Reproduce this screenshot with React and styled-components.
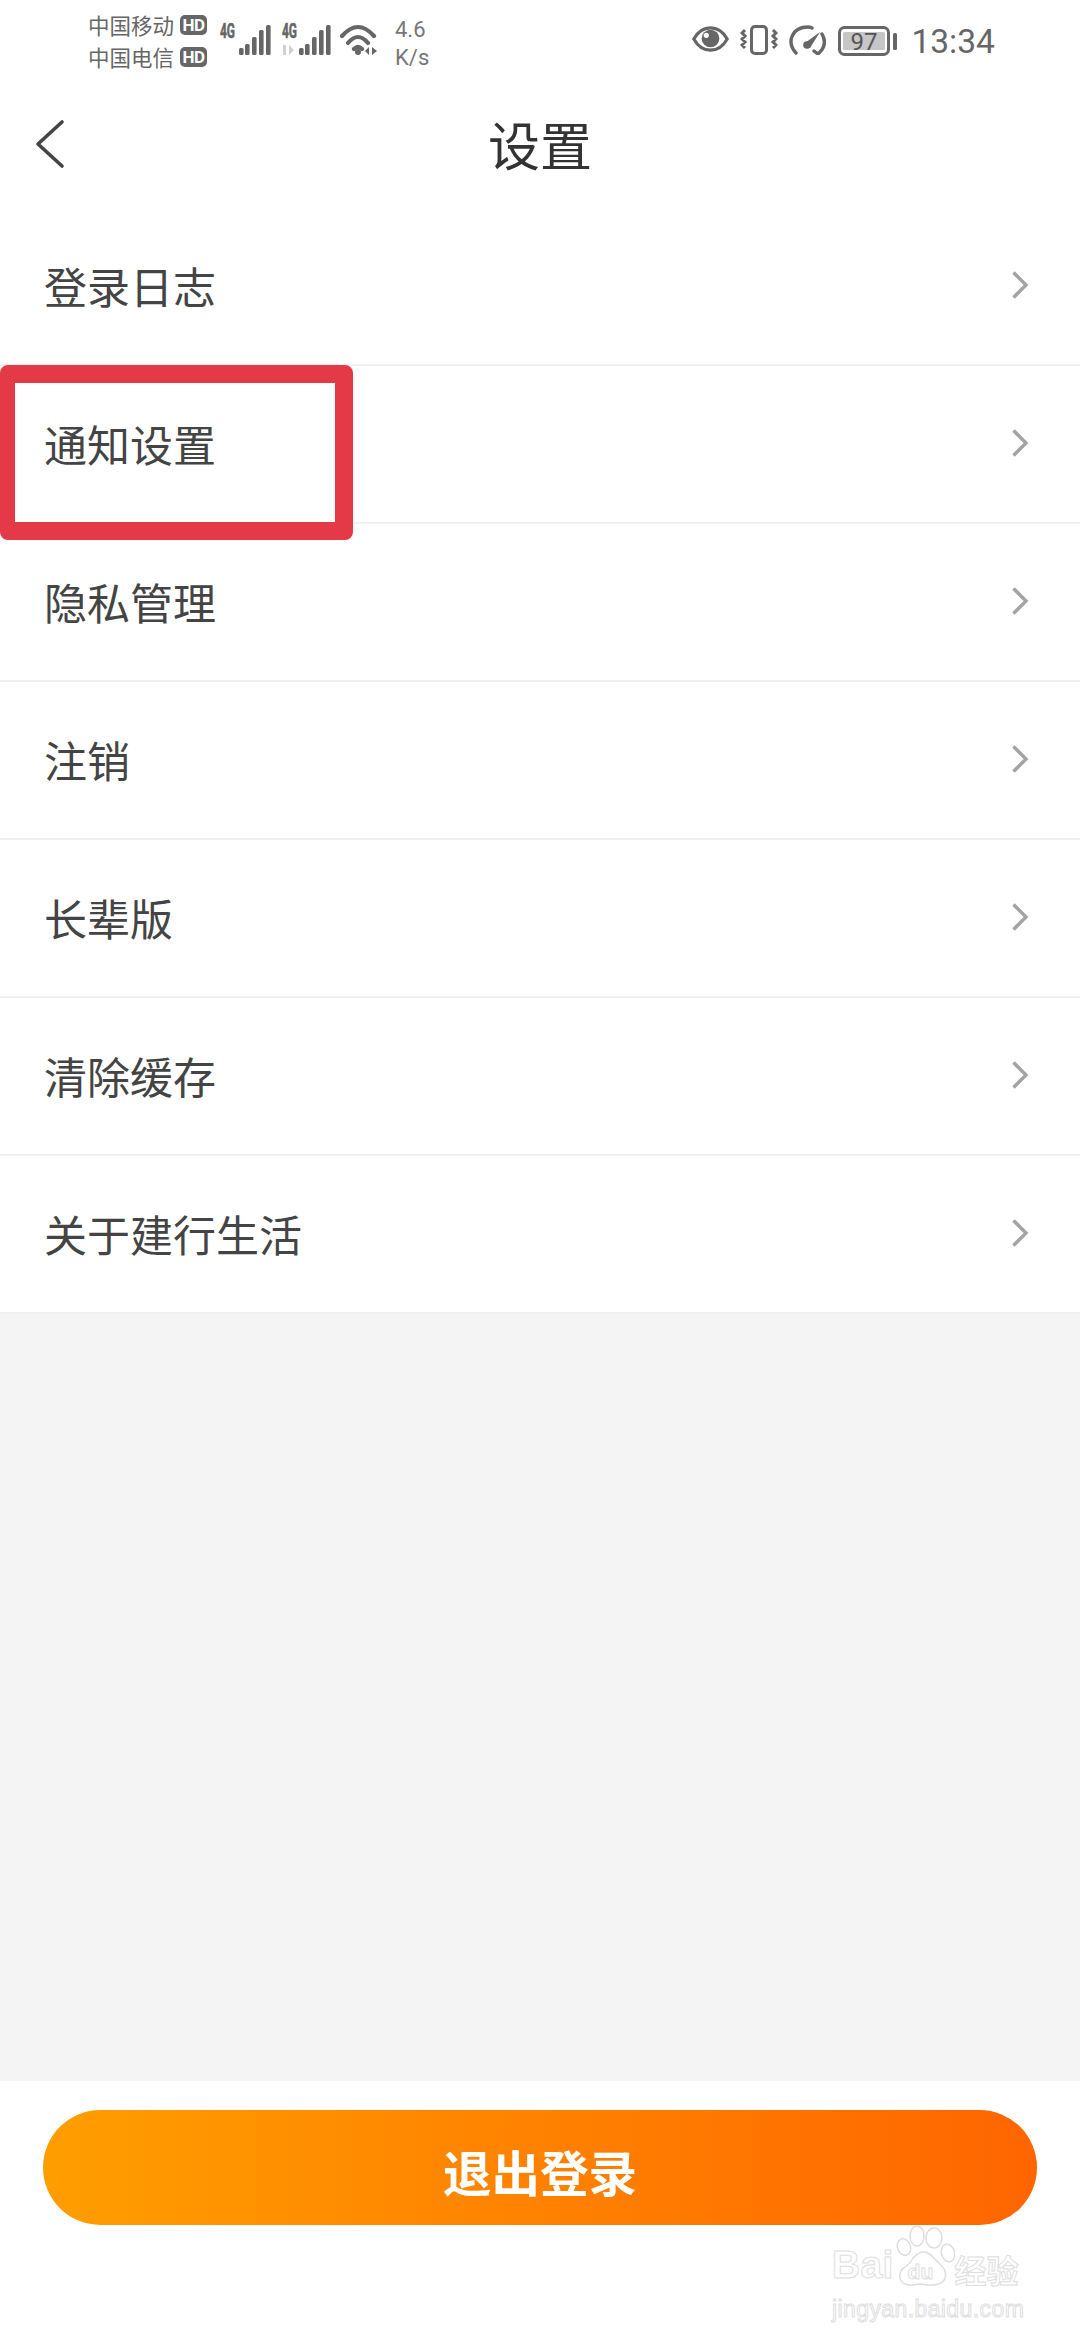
import React from "react";
import styled, { createGlobalStyle } from "styled-components";

const CJK = '"Noto Sans CJK SC", "Noto Sans", sans-serif';

const Reset = createGlobalStyle`
  html, body { margin: 0; padding: 0; background: #fff; }
  * { box-sizing: border-box; }
`;

const Page = styled.div`
  position: relative;
  width: 1080px;
  height: 2340px;
  display: flex;
  flex-direction: column;
  overflow: hidden;
  background: #f4f4f4;
  font-family: ${CJK};
`;

const StatusBar = styled.div`
  height: 80px;
  flex: none;
  display: flex;
  align-items: flex-start;
  padding: 8px 0 0 88px;
  background: #fff;
  color: #666;
`;

const Carriers = styled.div`
  width: 131px;
  flex: none;
  margin-top: 1px;
  display: flex;
  flex-direction: column;
`;

const CarrierLine = styled.div`
  height: 32px;
  display: flex;
  align-items: center;
  gap: 6px;
  font-size: 21.5px;
  line-height: 32px;
  white-space: nowrap;
`;

const HdBadge = styled.span`
  width: 27px;
  height: 20px;
  border-radius: 5px;
  background: #666;
  color: #fff;
  font: 700 17px/20px "Roboto", sans-serif;
  letter-spacing: -0.5px;
  text-align: center;
`;

const Glyph = styled.svg`
  flex: none;
  display: block;
  margin-left: ${(p) => p.$gap || 0}px;
  margin-top: ${(p) => p.$top || 0}px;
`;

const Speed = styled.div`
  width: 60px;
  margin-left: 17px;
  font: 400 22px/28px "Roboto", sans-serif;
  color: #777;
  padding-top: 8px;
`;

const RightCluster = styled.div`
  margin-left: auto;
  margin-right: 85px;
  display: flex;
  align-items: flex-start;
`;

const Clock = styled.div`
  margin-left: 14px;
  margin-top: 9px;
  font: 400 33.6px/50px "Roboto", sans-serif;
  color: #666;
`;

const NavBar = styled.header`
  position: relative;
  height: 128px;
  flex: none;
  display: flex;
  align-items: center;
  justify-content: center;
  background: #fff;
`;

const BackButton = styled.svg`
  position: absolute;
  left: 34px;
  top: 39px;
`;

const Title = styled.h1`
  margin: 0;
  font-size: 52px;
  font-weight: 400;
  line-height: 70px;
  color: #333;
`;

const List = styled.ul`
  margin: 0;
  padding: 0;
  list-style: none;
  flex: none;
  background: #fff;
`;

const Row = styled.li`
  height: 158px;
  padding: 0 51px 2px 44px;
  display: flex;
  align-items: center;
  justify-content: space-between;
  border-bottom: 2px solid #f0f0f0;
  font-size: 43px;
  color: #444;
`;

const Spacer = styled.div`
  flex: 1;
`;

const Footer = styled.footer`
  height: 259px;
  flex: none;
  padding: 29px 43px 0;
  background: #fff;
`;

const LogoutButton = styled.button`
  display: block;
  width: 994px;
  height: 115px;
  padding: 6px 0 0;
  border: 0;
  border-radius: 58px;
  background: linear-gradient(90deg, #ff9e00, #ff6500);
  color: #fff;
  font-family: ${CJK};
  font-size: 48.5px;
  font-weight: 700;
`;

const Highlight = styled.div`
  position: absolute;
  left: 0;
  top: 365px;
  width: 353px;
  height: 175px;
  border: solid #e43947;
  border-width: 18px 18px 18px 15px;
  border-radius: 8px;
`;

const Watermark = styled.div`
  position: absolute;
  left: 832px;
  top: 2225px;
  width: 192px;
  display: flex;
  flex-direction: column;
  color: #fff;
  -webkit-text-stroke: 1px #dedede;
  white-space: nowrap;
`;

const BrandLine = styled.div`
  display: flex;
  align-items: flex-end;
  height: 62px;
`;

const BrandLatin = styled.span`
  font: 700 39px/44px "Liberation Sans", sans-serif;
  letter-spacing: 0.3px;
`;

const PawBox = styled.div`
  position: relative;
  flex: none;
  width: 59px;
  height: 62px;
  margin-left: 2px;
`;

const PawText = styled.span`
  position: absolute;
  left: 12px;
  bottom: 3px;
  font: 700 21px/24px "Liberation Sans", sans-serif;
`;

const BrandCjk = styled.span`
  font: 700 32px/36px ${CJK};
`;

const BrandUrl = styled.div`
  margin-top: 8px;
  font: 400 23px/28px "Liberation Sans", sans-serif;
  letter-spacing: 0.4px;
`;

const Chevron = () => (
  <svg width="18" height="30" viewBox="0 0 18 30" fill="none">
    <path d="M2.5 2.5 15 15 2.5 27.5" stroke="#a3a3a3" strokeWidth="3.4" />
  </svg>
);

/* Cellular strength: x offset and top of each bar, all sharing one baseline. */
const SIM_ONE = [[20, 40], [26, 36], [33, 29], [40, 22], [47, 17]];
const SIM_TWO = [[19, 40], [25, 36], [32, 29], [39, 22], [46, 17]];

const SignalBars = ({ bars, labelX, active, gap }) => (
  <Glyph width="52" height="50" viewBox="0 0 52 50" $gap={gap}>
    <text x={labelX} y="30" fontFamily="Roboto" fontWeight="700" fontSize="20" fill="#666" stroke="#666" strokeWidth="0.6" textLength="15" lengthAdjust="spacingAndGlyphs">4G</text>
    {active && <path d="M3 37h3v10H3zM9 37l5 5-5 5z" fill="#d0d0d0" />}
    {bars.map(([x, top]) => (
      <rect key={x} x={x} y={top} width="4.6" height={47 - top} rx="1.5" fill="#666" />
    ))}
  </Glyph>
);

const Wifi = () => (
  <Glyph width="38" height="44" viewBox="0 0 38 44" fill="none" $gap={8} $top={6}>
    <path d="M2 22Q18 4 34 22M8 29Q18 17 28 29M14 35Q18 31 22 35" stroke="#666" strokeWidth="4.2" strokeLinecap="round" />
    <circle cx="18" cy="38" r="3" fill="#666" />
    <path d="M29 33v8l-4-4zM32 33v8l5-4z" fill="#666" />
  </Glyph>
);

const Eye = () => (
  <Glyph width="39" height="26" viewBox="0 0 40 28" $top={18}>
    <path d="M2 14C7 5 13 2 20 2s13 3 18 12c-5 9-11 12-18 12S7 23 2 14z" fill="none" stroke="#666" strokeWidth="3.4" />
    <circle cx="20" cy="13.5" r="9.5" fill="#666" />
    <circle cx="15.5" cy="10" r="2.8" fill="#fff" />
  </Glyph>
);

const Vibrate = () => (
  <Glyph width="38" height="30" viewBox="0 0 38 30" $gap={10} $top={17}>
    <rect x="11.5" y="1.5" width="15" height="27" rx="3.5" fill="none" stroke="#666" strokeWidth="3" />
    <path d="M5 5 2 8l3 3-3 3 3 3-3 3 3 3M33 5l3 3-3 3 3 3-3 3 3 3-3 3" fill="none" stroke="#666" strokeWidth="3" />
  </Glyph>
);

const Gauge = () => (
  <Glyph width="37" height="30" viewBox="0 0 37 30" fill="none" $gap={11} $top={17}>
    <path d="M7 28C-3 17 3 2 19 2c2 0 3 0 4 1" stroke="#666" strokeWidth="3.4" strokeLinecap="round" />
    <path d="M33 9c4 7 3 14-4 20l-4-3" stroke="#666" strokeWidth="3.4" strokeLinecap="round" />
    <path d="M16 18 31 7 21 23z" fill="#666" />
    <circle cx="18" cy="20" r="3.8" fill="#666" />
  </Glyph>
);

const Battery = () => (
  <Glyph width="59" height="30" viewBox="0 0 59 30" $gap={12} $top={18}>
    <rect x="1.5" y="1.5" width="49" height="27" rx="5" fill="none" stroke="#666" strokeWidth="3" />
    <rect x="5" y="6" width="42" height="18" rx="1.5" fill="#c6c6c6" />
    <rect x="55" y="7" width="4" height="17" rx="1.5" fill="#666" />
    <text x="26" y="24" textAnchor="middle" fontFamily="Roboto" fontSize="24" fill="#555">97</text>
  </Glyph>
);

const Paw = () => (
  <svg width="59" height="62" viewBox="0 0 59 62" fill="#fff" stroke="#dedede" strokeWidth="1.5">
    <ellipse cx="21" cy="11" rx="7" ry="10" />
    <ellipse cx="38" cy="13" rx="8" ry="10" />
    <ellipse cx="8" cy="22" rx="6.5" ry="8.5" transform="rotate(-20 8 22)" />
    <ellipse cx="52" cy="28" rx="6.5" ry="9" transform="rotate(-15 52 28)" />
    <path d="M28 27c7 0 10 7 16 12 7 6 10 20-7 21-6 .5-10-1-13-1-5 1-11 2-15 0C2 56 2 46 9 42c8-5 9-15 19-15z" />
  </svg>
);

const rows = ["登录日志", "通知设置", "隐私管理", "注销", "长辈版", "清除缓存", "关于建行生活"];

export default function App() {
  return (
    <Page>
      <Reset />
      <StatusBar>
        <Carriers>
          <CarrierLine>中国移动<HdBadge>HD</HdBadge></CarrierLine>
          <CarrierLine>中国电信<HdBadge>HD</HdBadge></CarrierLine>
        </Carriers>
        <SignalBars bars={SIM_ONE} labelX={1} />
        <SignalBars bars={SIM_TWO} labelX={2} active gap={9} />
        <Wifi />
        <Speed>4.6<br />K/s</Speed>
        <RightCluster>
          <Eye />
          <Vibrate />
          <Gauge />
          <Battery />
          <Clock>13:34</Clock>
        </RightCluster>
      </StatusBar>
      <NavBar>
        <BackButton width="32" height="50" viewBox="0 0 32 50" fill="none">
          <path d="M28 3 4 25l24 22" stroke="#444" strokeWidth="3.6" strokeLinecap="round" strokeLinejoin="round" />
        </BackButton>
        <Title>设置</Title>
      </NavBar>
      <List>
        {rows.map((label) => (
          <Row key={label}>
            {label}
            <Chevron />
          </Row>
        ))}
      </List>
      <Spacer />
      <Footer>
        <LogoutButton>退出登录</LogoutButton>
      </Footer>
      <Highlight />
      <Watermark>
        <BrandLine>
          <BrandLatin>Bai</BrandLatin>
          <PawBox>
            <Paw />
            <PawText>du</PawText>
          </PawBox>
          <BrandCjk>经验</BrandCjk>
        </BrandLine>
        <BrandUrl>jingyan.baidu.com</BrandUrl>
      </Watermark>
    </Page>
  );
}
